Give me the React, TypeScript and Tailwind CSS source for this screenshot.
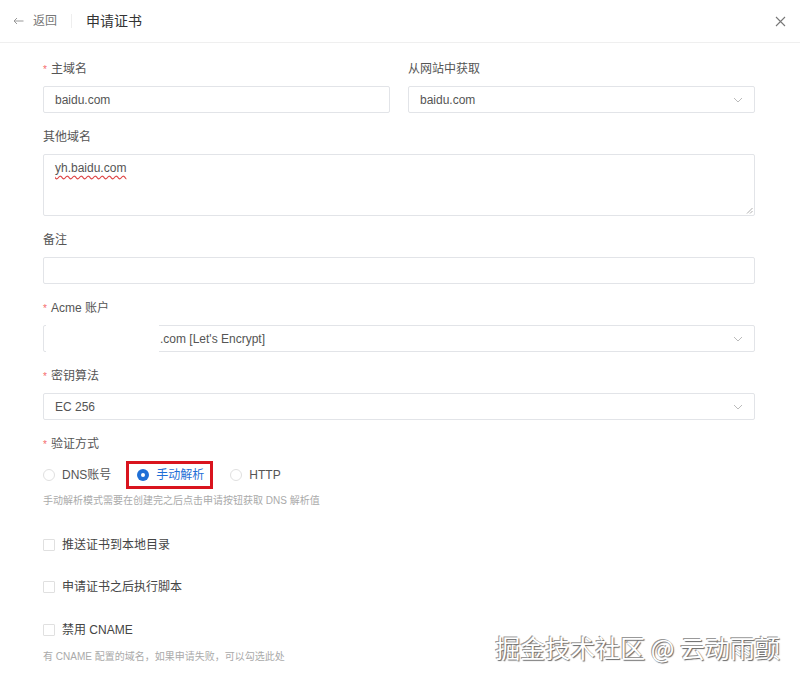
import React from 'react';

const FONT = '"Liberation Sans", "Noto Sans CJK SC", sans-serif';

function Chevron() {
  return (
    <svg width="10" height="6" viewBox="0 0 10 6" fill="none" className="text-[#bbb]">
      <path d="M1 1l4 4 4-4" stroke="currentColor" strokeWidth="1" />
    </svg>
  );
}

function Label({ text, required }: { text: string; required?: boolean }) {
  return (
    <div className="h-[17px] leading-[17px] text-[12px] text-[#555] flex items-center">
      {required && <span className="text-[#f56c6c] mr-[4px] text-[10px]">*</span>}
      {text}
    </div>
  );
}

function Input({ value, select }: { value?: string; select?: boolean }) {
  return (
    <div className="mt-[8px] h-[27px] border border-[#e2e4e8] rounded-[2px] flex items-center justify-between px-[11px] text-[12px] text-[#555]">
      <span>{value}</span>
      {select && <Chevron />}
    </div>
  );
}

function Radio({ label, checked }: { label: string; checked?: boolean }) {
  return (
    <div className={`flex items-center gap-[7px] text-[12px] ${checked ? 'text-[#1f6fd6]' : 'text-[#555]'}`}>
      {checked ? (
        <span className="w-[12px] h-[12px] rounded-full bg-[#1f6fd6] flex items-center justify-center">
          <span className="w-[4px] h-[4px] rounded-full bg-white" />
        </span>
      ) : (
        <span className="w-[12px] h-[12px] rounded-full border border-[#e0e0e0]" />
      )}
      {label}
    </div>
  );
}

function Check({ label }: { label: string }) {
  return (
    <div className="h-[20px] flex items-center gap-[7px] text-[12px] text-[#444]">
      <span className="w-[12px] h-[12px] border border-[#e0e0e0] rounded-[1px]" />
      {label}
    </div>
  );
}

export default function App() {
  return (
    <div className="relative w-[800px] h-[683px] bg-white overflow-hidden" style={{ fontFamily: FONT }}>
      {/* Header */}
      <div className="h-[43px] border-b border-[#efefef] flex items-center pl-[13px] pr-[14px]">
        <svg width="11" height="8" viewBox="0 0 11 8" fill="none" className="text-[#999]">
          <path d="M10.5 4H1M4 1L1 4l3 3" stroke="currentColor" strokeWidth="1" />
        </svg>
        <span className="ml-[9px] text-[12px] text-[#777]">返回</span>
        <span className="ml-[14px] w-px h-[14px] bg-[#eeeeee]" />
        <span className="ml-[14px] text-[14px] text-[#333]">申请证书</span>
        <svg width="11" height="11" viewBox="0 0 11 11" className="ml-auto text-[#777]">
          <path d="M1 1l9 9M10 1l-9 9" stroke="currentColor" strokeWidth="1.1" />
        </svg>
      </div>

      {/* Form */}
      <div className="pl-[43px] w-[755px] pt-[18px]">
        <div className="grid grid-cols-2 gap-x-[18px]">
          <div>
            <Label text="主域名" required />
            <Input value="baidu.com" />
          </div>
          <div>
            <Label text="从网站中获取" />
            <Input value="baidu.com" select />
          </div>
        </div>

        <div className="mt-[16px]">
          <Label text="其他域名" />
          <div className="relative mt-[8px] h-[62px] border border-[#e2e4e8] rounded-[2px] px-[11px] pt-[4px] text-[12px] text-[#555]">
            <span className="underline decoration-wavy decoration-[#d44] underline-offset-[3px]">yh.baidu.com</span>
            <svg width="7" height="7" viewBox="0 0 7 7" className="absolute right-[1px] bottom-[1px] text-[#999]">
              <path d="M6.5 1L1 6.5M6.5 4L4 6.5" stroke="currentColor" strokeWidth="0.8" />
            </svg>
          </div>
        </div>

        <div className="mt-[16px]">
          <Label text="备注" />
          <Input />
        </div>

        <div className="mt-[16px]">
          <Label text="Acme 账户" required />
          <div className="relative mt-[8px] h-[27px] border border-[#e2e4e8] rounded-[2px] flex items-center justify-between pl-[116px] pr-[11px] text-[12px] text-[#555]">
            <span>.com [Let's Encrypt]</span>
            <Chevron />
            <div className="absolute left-[2px] top-[-2px] w-[113px] h-[31px] bg-white" />
          </div>
        </div>

        <div className="mt-[16px]">
          <Label text="密钥算法" required />
          <Input value="EC 256" select />
        </div>

        <div className="mt-[16px]">
          <Label text="验证方式" required />
          <div className="mt-[8px] h-[28px] flex items-center">
            <Radio label="DNS账号" />
            <div className="ml-[15px] h-[28px] w-[87px] border-[3px] border-[#d9141e] flex items-center pl-[8px]">
              <Radio label="手动解析" checked />
            </div>
            <div className="ml-[17px]">
              <Radio label="HTTP" />
            </div>
          </div>
          <div className="mt-[5px] text-[10px] leading-[14px] text-[#aaa]">
            手动解析模式需要在创建完之后点击申请按钮获取 DNS 解析值
          </div>
        </div>

        <div className="mt-[27px]">
          <Check label="推送证书到本地目录" />
        </div>
        <div className="mt-[22px]">
          <Check label="申请证书之后执行脚本" />
        </div>
        <div className="mt-[23px]">
          <Check label="禁用 CNAME" />
        </div>
        <div className="mt-[10px] text-[10px] leading-[14px] text-[#aaa]">
          有 CNAME 配置的域名，如果申请失败，可以勾选此处
        </div>
      </div>

      {/* Watermark */}
      <div
        className="absolute right-[20px] top-[632px] text-[25px] leading-[30px] text-white [text-shadow:1px_1px_1px_#666,-1px_-1px_0_#999]"
        style={{ fontFamily: '"Noto Sans CJK SC", sans-serif' }}
      >
        掘金技术社区 @ 云动雨颤
      </div>
    </div>
  );
}
